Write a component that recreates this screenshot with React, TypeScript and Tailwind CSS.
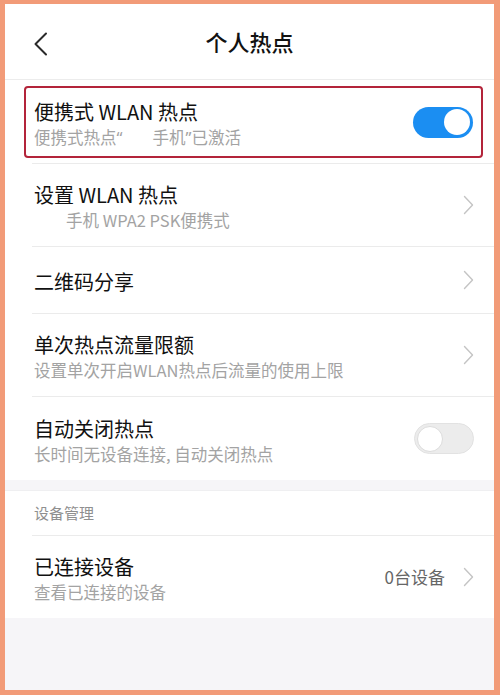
import { ReactNode } from "react";

const font = { fontFamily: '"Noto Sans CJK SC", "Noto Sans", sans-serif' };

const Chevron = () => (
  <svg width="11" height="20" viewBox="0 0 11 20" fill="none" className="shrink-0">
    <path d="M1.5 1.5 L9.5 10 L1.5 18.5" stroke="#c4c4c4" strokeWidth="1.4" strokeLinecap="round" strokeLinejoin="round" />
  </svg>
);

const Toggle = ({ on }: { on: boolean }) =>
  on ? (
    <div className="flex h-[31px] w-[60px] shrink-0 items-center justify-end rounded-full bg-[#1b8ef2] pr-[3px]">
      <div className="h-[26px] w-[26px] rounded-full bg-white" />
    </div>
  ) : (
    <div className="flex h-[31px] w-[60px] shrink-0 items-center rounded-full border border-[#e2e2e2] bg-[#ececec] pl-[2px]">
      <div className="h-[26px] w-[26px] rounded-full border border-[#dcdcdc] bg-white" />
    </div>
  );

const Divider = () => <div className="ml-[27px] h-px bg-[#ebebeb]" />;

type RowProps = {
  title: string;
  sub?: ReactNode;
  right?: ReactNode;
  height: string;
};

const Row = ({ title, sub, right, height }: RowProps) => (
  <div className={`flex items-center bg-white pl-[29px] pr-[20px] ${height}`}>
    <div className="flex flex-1 flex-col pt-[4px]">
      <span className="text-[20px] leading-[26px] text-[#111]">{title}</span>
      {sub && <span className="text-[16.5px] leading-[24px] text-[#a3a3a3]">{sub}</span>}
    </div>
    {right}
  </div>
);

// straight quote marks sit in a latin face, as on the device
const Quote = ({ children }: { children: string }) => (
  <span style={{ fontFamily: '"Noto Sans", sans-serif' }}>{children}</span>
);

export default function App() {
  return (
    <div className="h-[695px] w-[500px] bg-[#f29b78] pb-[5px] pl-[5px] pr-[6px] pt-[4px]" style={font}>
      <div className="flex h-full flex-col bg-[#f6f5f8]">
        {/* Top bar */}
        <header className="relative flex h-[76px] items-center justify-center border-b border-[#ececec] bg-white">
          <svg width="16" height="24" viewBox="0 0 16 24" fill="none" className="absolute left-[28px] top-[28px]">
            <path d="M13 1.5 L2.5 12 L13 22.5" stroke="#2a2a2a" strokeWidth="2" strokeLinecap="round" strokeLinejoin="round" />
          </svg>
          <h1 className="text-[22px] font-medium text-[#111]">个人热点</h1>
        </header>

        {/* Portable hotspot, highlighted */}
        <div className="bg-white pb-[5px] pl-[19px] pr-[11px] pt-[6px]">
          <div className="flex h-[72px] items-center rounded-[4px] border-2 border-[#b3243a] pl-[8px] pr-[8px]">
            <div className="flex flex-1 flex-col pt-[5px]">
              <span className="text-[20px] leading-[26px] text-[#111]">便携式 WLAN 热点</span>
              <span className="text-[16.5px] leading-[24px] text-[#a3a3a3]">
                便携式热点<Quote>“</Quote>
                <span className="inline-block w-[30px]" />
                手机<Quote>”</Quote>已激活
              </span>
            </div>
            <Toggle on />
          </div>
        </div>
        <div className="bg-white"><Divider /></div>

        <div className="bg-white">
          <Row
            title="设置 WLAN 热点"
            sub={<span className="pl-[32px]">手机 WPA2 PSK便携式</span>}
            right={<Chevron />}
            height="h-[82px]"
          />
          <Divider />
          <Row title="二维码分享" right={<Chevron />} height="h-[66px]" />
          <Divider />
          <Row title="单次热点流量限额" sub="设置单次开启WLAN热点后流量的使用上限" right={<Chevron />} height="h-[82px]" />
          <Divider />
          <Row title="自动关闭热点" sub="长时间无设备连接, 自动关闭热点" right={<Toggle on={false} />} height="h-[83px]" />
        </div>

        {/* Device section */}
        <div className="mt-[10px] border-t border-[#efeff1] bg-white">
          <div className="flex h-[44px] items-center pl-[29px] text-[15px] text-[#8f8f8f]">设备管理</div>
          <Divider />
          <Row
            title="已连接设备"
            sub="查看已连接的设备"
            right={
              <div className="flex items-center gap-[18px]">
                <span className="text-[17px] text-[#666]">0台设备</span>
                <Chevron />
              </div>
            }
            height="h-[82px]"
          />
        </div>
      </div>
    </div>
  );
}
